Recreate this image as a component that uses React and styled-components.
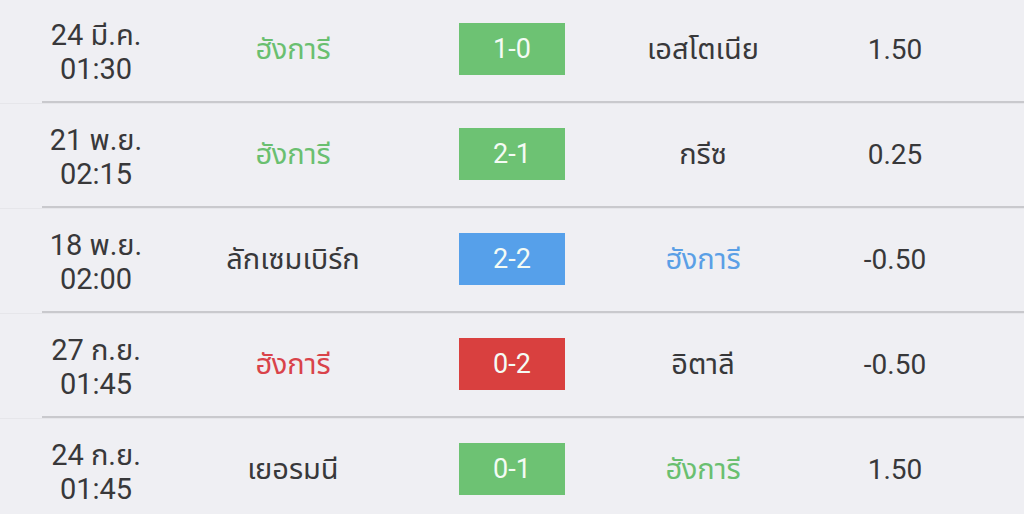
import React from 'react'
import styled, { createGlobalStyle } from 'styled-components'

const GlobalStyle = createGlobalStyle`
  html, body {
    margin: 0;
    padding: 0;
    background: #efeff3;
    overflow: hidden;
  }
  body {
    font-family: Roboto, "Noto Sans Thai", "Noto Sans", "DejaVu Sans", sans-serif;
    color: #38383a;
  }
`

const COLORS = {
  win: '#6dc273',
  draw: '#56a0ea',
  loss: '#d9403f',
}

const TEXT_COLORS = {
  win: '#6abf70',
  draw: '#5a9fe6',
  loss: '#d9434a',
}

const matches = [
  { date: '24 มี.ค.', time: '01:30', home: 'ฮังการี', away: 'เอสโตเนีย', score: '1-0', result: 'win', side: 'home', odds: '1.50' },
  { date: '21 พ.ย.', time: '02:15', home: 'ฮังการี', away: 'กรีซ', score: '2-1', result: 'win', side: 'home', odds: '0.25' },
  { date: '18 พ.ย.', time: '02:00', home: 'ลักเซมเบิร์ก', away: 'ฮังการี', score: '2-2', result: 'draw', side: 'away', odds: '-0.50' },
  { date: '27 ก.ย.', time: '01:45', home: 'ฮังการี', away: 'อิตาลี', score: '0-2', result: 'loss', side: 'home', odds: '-0.50' },
  { date: '24 ก.ย.', time: '01:45', home: 'เยอรมนี', away: 'ฮังการี', score: '0-1', result: 'win', side: 'away', odds: '1.50' },
]

function App() {
  return (
    <>
      <GlobalStyle />
      <List>
        {matches.map((m, i) => (
          <Row key={i}>
            <Inner>
              <DateCell>
                <span>{m.date}</span>
                <span>{m.time}</span>
              </DateCell>
              <Team $result={m.side === 'home' ? m.result : null}>{m.home}</Team>
              <ScoreCell>
                <Score $result={m.result}>{m.score}</Score>
              </ScoreCell>
              <Team $result={m.side === 'away' ? m.result : null}>{m.away}</Team>
              <Odds>{m.odds}</Odds>
            </Inner>
          </Row>
        ))}
      </List>
    </>
  )
}

export default App

const List = styled.div`
  margin-top: -2px;
  width: 1024px;
`

const Row = styled.div`
  padding-left: 42px;
  border-bottom: 1px solid #e6e6ea;
  margin-bottom: -1px;
`

const Inner = styled.div`
  display: grid;
  grid-template-columns: 108px 286px 152px 230px 154px 1fr;
  align-items: center;
  height: 103px;
  border-bottom: 2px solid #c9c9cd;
`

const DateCell = styled.div`
  display: flex;
  flex-direction: column;
  align-items: center;
  font-size: 29px;
  line-height: 34px;
  color: #38383a;
  white-space: nowrap;
  margin-top: 4px;
`

const Team = styled.div`
  text-align: center;
  font-size: 29px;
  white-space: nowrap;
  color: ${p => (p.$result ? TEXT_COLORS[p.$result] : '#38383a')};
`

const ScoreCell = styled.div`
  display: flex;
  justify-content: center;
`

const Score = styled.div`
  width: 106px;
  height: 52px;
  display: flex;
  align-items: center;
  justify-content: center;
  background: ${p => COLORS[p.$result]};
  color: #f4fbf4;
  font-size: 27px;
  margin-top: -2px;
`

const Odds = styled.div`
  text-align: center;
  font-size: 28px;
  color: #38383a;
`
